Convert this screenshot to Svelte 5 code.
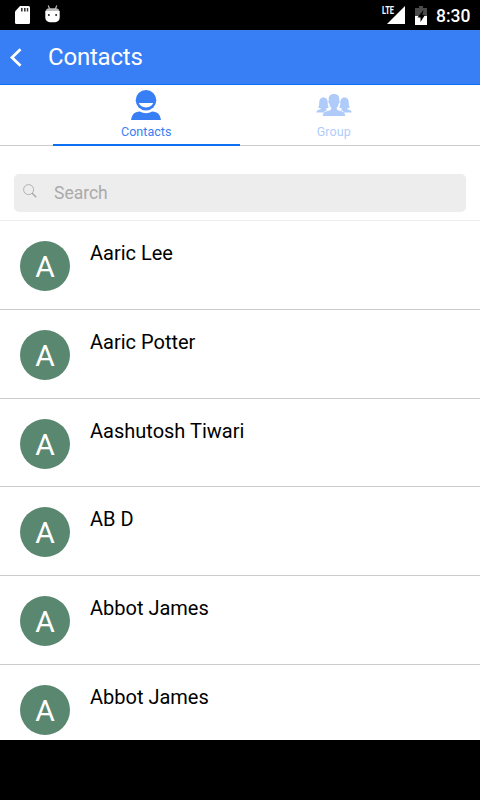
<script lang="ts">
  type Contact = { id: number; name: string };

  const contacts: Contact[] = [
    { id: 1, name: 'Aaric Lee' },
    { id: 2, name: 'Aaric Potter' },
    { id: 3, name: 'Aashutosh Tiwari' },
    { id: 4, name: 'AB D' },
    { id: 5, name: 'Abbot James' },
    { id: 6, name: 'Abbot James' }
  ];

  let tab = 'contacts';
  let search = '';

  $: filtered = contacts.filter((c) => c.name.toLowerCase().includes(search.toLowerCase()));
</script>

<div class="screen">
  <div class="status-bar">
    <svg class="sd" width="15" height="18" viewBox="0 0 15 18">
      <path d="M5 0h8.500a1.500 1.500 0 0 1 1.500 1.500v15a1.500 1.500 0 0 1-1.500 1.500h-12A1.500 1.500 0 0 1 0 16.500V5.500z" fill="#fff" />
      <path d="M6 2h1.600v3.500H6zM9 2h1.600v3.500H9zM11.800 2h1.400v3.500h-1.400z" fill="#333" />
    </svg>
    <svg class="droid" width="15" height="18" viewBox="0 0 15 18">
      <path d="M3.200.5l1.500 3.500M11.800.5l-1.500 3.500" stroke="#bbb" stroke-width="1.200" />
      <path d="M.5 6.500a4 4 0 0 1 4-3.300h6a4 4 0 0 1 4 3.300z" fill="#bdbdbd" />
      <path d="M.3 6h14.400v6.500a4.500 4.500 0 0 1-4.500 4.700H4.800a4.500 4.500 0 0 1-4.500-4.700z" fill="#fff" />
      <circle cx="3.900" cy="10" r="1" fill="#222" />
      <circle cx="11.100" cy="10" r="1" fill="#222" />
    </svg>
    <div class="spacer"></div>
    <svg class="signal" width="24" height="22" viewBox="0 0 24 22">
      <path d="M24 4v18H6z" fill="#fff" />
      <text x="1" y="12" textLength="12" lengthAdjust="spacingAndGlyphs">LTE</text>
    </svg>
    <svg class="battery" width="12" height="19" viewBox="0 0 12 19">
      <path d="M4 0h4v2h4v8H0V2h4z" fill="#4a4a4a" />
      <path d="M0 10h12v9H0z" fill="#fff" />
      <path d="M8.500 4L2.500 11.500h3V16l4.500-7H7.500z" fill="#000" />
    </svg>
    <span class="clock">8:30</span>
  </div>

  <header>
    <button class="back" aria-label="Back">
      <svg width="13" height="19" viewBox="0 0 13 19">
        <path d="M11.500 1.200L3 9.500l8.500 8.300" fill="none" stroke="#fff" stroke-width="2.800" />
      </svg>
    </button>
    <h1>Contacts</h1>
  </header>

  <nav>
    <button class="tab" class:active={tab === 'contacts'} on:click={() => (tab = 'contacts')}>
      <svg width="30" height="30" viewBox="0 0 30 30">
        <ellipse cx="15" cy="10.200" rx="10.300" ry="10.200" />
        <path d="M7.800 13h14.400c-1 2.800-3.600 4.400-7.200 4.400S8.800 15.800 7.800 13z" fill="#fff" />
        <path d="M0 30c.6-3.600 2-6.600 4.500-7.600 1.500-.6 3-.9 4.500-1 3.800 2.300 8.200 2.300 12 0 1.500.1 3 .4 4.500 1 2.500 1 3.900 4 4.500 7.600z" />
      </svg>
      <span>Contacts</span>
    </button>
    <button class="tab" class:active={tab === 'group'} on:click={() => (tab = 'group')}>
      <svg width="36" height="30" viewBox="0 0 36 30">
        <path d="M.3 22.400c.2-1.600 1.200-2.300 4.500-3.100v-1.100c-1 .1-2-.2-2.700-.9 1-.8 1.100-2 1.100-3.800C3.200 9.800 4.300 7.500 7.500 7.500s4.300 2.300 4.300 6c0 1.800.1 3 1.100 3.800-.7.7-1.700 1-2.700.9v1.300l1.400.5c-2 .6-3 1.200-3.500 2.400z" />
        <path d="M35.700 22.400c-.2-1.600-1.200-2.300-4.500-3.100v-1.100c1 .1 2-.2 2.700-.9-1-.8-1.100-2-1.100-3.800 0-3.700-1.100-6-4.300-6s-4.300 2.300-4.300 6c0 1.800-.1 3-1.100 3.800.7.7 1.700 1 2.700.9v1.300l-1.400.5c2 .6 3 1.200 3.500 2.400z" />
        <path d="M6.800 26c.2-3.200 1.500-4 5-4.900 2.600-.6 3.600-1.100 3.600-3.300-1.300-1-1.800-2.300-2.100-4.200-1.200-.3-1.300-2.900-.4-3.200C12.200 6.400 14 4 18 4s5.800 2.400 5.100 6.400c.9.3.8 2.900-.4 3.200-.3 1.900-.8 3.200-2.100 4.200 0 2.200 1 2.700 3.600 3.300 3.500.9 4.800 1.700 5 4.900z" />
      </svg>
      <span>Group</span>
    </button>
  </nav>

  <div class="search">
    <label>
      <svg width="14" height="14" viewBox="0 0 14 14">
        <circle cx="5.600" cy="5.600" r="5" fill="none" stroke="#aaa" stroke-width=".9" />
        <path d="M9.200 9.200l4 4" stroke="#aaa" stroke-width="1.500" />
      </svg>
      <input type="text" placeholder="Search" bind:value={search} />
    </label>
  </div>

  <ul>
    {#each filtered as contact (contact.id)}
      <li>
        <div class="avatar">{contact.name[0]}</div>
        <span class="name">{contact.name}</span>
      </li>
    {/each}
  </ul>

  <div class="bottom-bar"></div>
</div>

<style>
  :global(body) {
    margin: 0;
    overflow: hidden;
  }

  .screen {
    width: 480px;
    height: 800px;
    display: flex;
    flex-direction: column;
    background: #fff;
    font-family: Roboto, sans-serif;
    overflow: hidden;
  }

  .status-bar {
    height: 30px;
    flex: none;
    display: flex;
    align-items: center;
    box-sizing: border-box;
    padding: 0 10px 0 15px;
    background: #000;
    color: #fff;
  }

  .droid {
    margin: -3px 0 0 15px;
  }

  .spacer {
    flex: 1;
  }

  .signal {
    margin: -4px 10px 0 0;
    overflow: visible;
  }

  .signal text {
    fill: #fff;
    stroke: #000;
    stroke-width: 1px;
    paint-order: stroke;
    font-size: 10.500px;
    font-weight: 700;
  }

  .battery {
    margin-right: 9px;
  }

  .clock {
    width: 34px;
    font-size: 17.500px;
    line-height: 30px;
    font-weight: 500;
    padding-top: 1px;
  }

  header {
    height: 55px;
    flex: none;
    display: flex;
    align-items: center;
    box-sizing: border-box;
    padding-left: 9px;
    background: #387ef5;
    border-bottom: 1px solid #0c70f5;
  }

  button {
    border: none;
    background: none;
    padding: 0;
    font-family: inherit;
    cursor: pointer;
  }

  .back {
    display: flex;
    width: 39px;
  }

  h1 {
    margin: 0;
    font-size: 24px;
    font-weight: 400;
    line-height: 54px;
    letter-spacing: -0.2px;
    color: #fff;
  }

  nav {
    height: 61px;
    flex: none;
    display: flex;
    justify-content: center;
    box-sizing: border-box;
    border-bottom: 1px solid #ccc;
  }

  .tab {
    width: 187.500px;
    height: 61px;
    display: flex;
    flex-direction: column;
    align-items: center;
    box-sizing: border-box;
    padding-top: 5px;
    color: #387ef5;
    fill: #387ef5;
    opacity: 0.4;
  }

  .tab span {
    margin-top: 4px;
    font-size: 12.500px;
    line-height: 16px;
    letter-spacing: 0.05px;
  }

  .tab.active {
    opacity: 1;
    border-bottom: 2px solid #0c70f5;
  }

  .tab svg {
    flex: none;
  }

  .search {
    flex: none;
    height: 75px;
    box-sizing: border-box;
    padding: 28px 14px 0;
    border-bottom: 1px solid #eee;
  }

  label {
    height: 38px;
    display: flex;
    box-sizing: border-box;
    padding: 0 9px;
    border-radius: 5px;
    background: #ededed;
  }

  label svg {
    flex: none;
    margin: 10px 17px 0 0;
  }

  input {
    flex: 1;
    border: none;
    outline: none;
    padding: 0;
    background: none;
    font-family: inherit;
    font-size: 17.500px;
  }

  input::placeholder {
    color: #aaa;
  }

  ul {
    flex: 1;
    min-height: 0;
    margin: 0;
    padding: 0;
    list-style: none;
    overflow: hidden;
  }

  li {
    height: 88.750px;
    display: flex;
    box-sizing: border-box;
    padding: 20px 20px 0;
    border-bottom: 1px solid #ccc;
  }

  .avatar {
    width: 50px;
    height: 50px;
    border-radius: 50%;
    background: #5a8770;
    color: #fff;
    font-size: 30px;
    line-height: 51px;
    text-align: center;
  }

  .name {
    margin-left: 20px;
    font-size: 20px;
    line-height: 24px;
    color: #000;
  }

  .bottom-bar {
    height: 60px;
    flex: none;
    background: #000;
  }
</style>
